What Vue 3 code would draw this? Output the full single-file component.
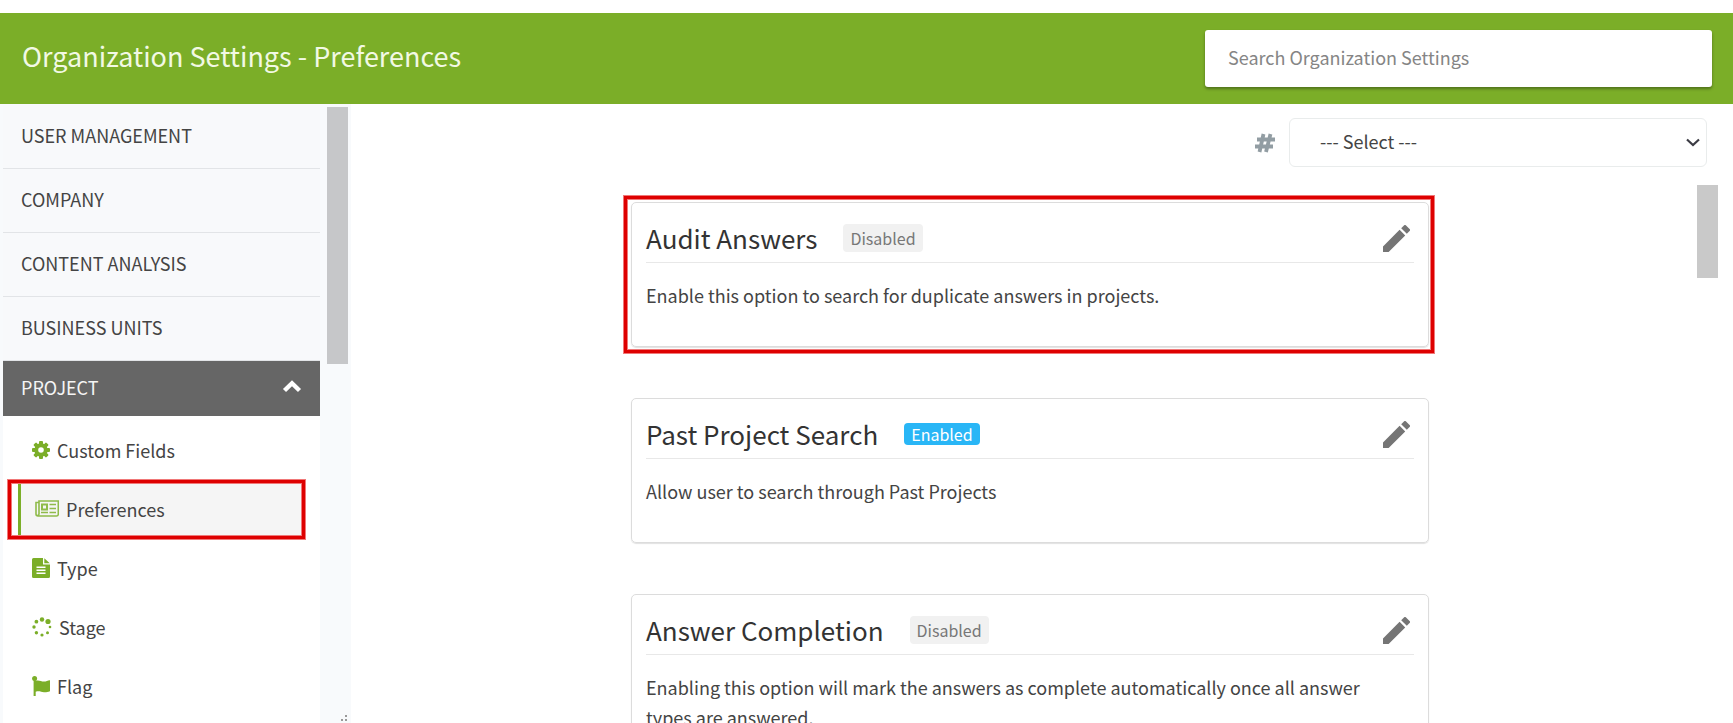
<script setup>
import { ref } from 'vue'

// Top level sections of the sidebar
const sections = ref(['USER MANAGEMENT', 'COMPANY', 'CONTENT ANALYSIS', 'BUSINESS UNITS'])

// Links inside the Project section
const links = ref([
  { name: 'Custom Fields', icon: 'cog' },
  { name: 'Preferences', icon: 'news' },
  { name: 'Type', icon: 'file' },
  { name: 'Stage', icon: 'spinner' },
  { name: 'Flag', icon: 'flag' }
])

const preferences = ref([
  {
    title: 'Audit Answers',
    enabled: false,
    marked: true,
    text: 'Enable this option to search for duplicate answers in projects.'
  },
  {
    title: 'Past Project Search',
    enabled: true,
    text: 'Allow user to search through Past Projects'
  },
  {
    title: 'Answer Completion',
    enabled: false,
    text: 'Enabling this option will mark the answers as complete automatically once all answer types are answered.'
  }
])

const active = ref('Preferences')
const projectOpen = ref(true)
const search = ref('')
const selected = ref('')
</script>

<template>
  <div class="page">
    <header class="topbar">
      <h1>Organization Settings - Preferences</h1>
      <input v-model="search" type="text" aria-label="Search Organization Settings" placeholder="Search Organization Settings" />
    </header>

    <div class="body">
      <!-- Sidebar -->
      <aside class="sidebar">
        <nav>
          <button v-for="section in sections" :key="section" class="section">{{ section }}</button>
          <button class="section open" @click="projectOpen = !projectOpen">
            PROJECT
            <svg width="20" height="13" viewBox="0 0 20 13">
              <path d="M2.5 10.5 10 3.2l7.5 7.3" fill="none" stroke="#fff" stroke-width="4.4" />
            </svg>
          </button>
          <ul v-if="projectOpen">
            <li v-for="link in links" :key="link.name">
              <a href="#" :class="{ active: link.name === active }" @click.prevent="active = link.name">
                <svg v-if="link.icon === 'cog'" width="18" height="18" viewBox="0 0 18 18">
                  <g fill="#7bae28">
                    <rect v-for="n in 4" :key="n" x="7" y="0" width="4" height="18" rx="1" :transform="`rotate(${n * 45} 9 9)`" />
                    <circle cx="9" cy="9" r="6.7" />
                  </g>
                  <circle cx="9" cy="9" r="2.8" fill="#fff" />
                </svg>
                <svg v-else-if="link.icon === 'news'" width="24" height="17" viewBox="0 0 24 17" fill="none" stroke="#8fbb4a">
                  <path d="M4 2.5H1V14a2 2 0 0 0 2 2h18.5a1.8 1.8 0 0 0 1.8-1.8V1H4v13a1.5 1.5 0 0 1-3 0" stroke-width="1.6" />
                  <rect x="7" y="4.5" width="5" height="5" stroke-width="2" />
                  <path d="M14.5 4.500h6.5M14.5 8.500h6.5M14.5 12.500h6.5M6 12.500h7" stroke-width="1.6" />
                </svg>
                <svg v-else-if="link.icon === 'file'" width="18" height="20" viewBox="0 0 18 20">
                  <path d="M1.5 0H11v6.5h7v12a1.5 1.5 0 0 1-1.5 1.5h-15A1.5 1.5 0 0 1 0 18.500v-17A1.5 1.5 0 0 1 1.5 0zM12.3.2 17.8 5.300h-5.5z" fill="#7bae28" />
                  <path d="M4.5 9.300h9M4.5 12.300h9M4.5 15.300h9" stroke="#fff" stroke-width="1.4" />
                </svg>
                <svg v-else-if="link.icon === 'spinner'" width="20" height="20" viewBox="0 0 20 20" fill="#7bae28">
                  <circle cx="10" cy="2.5" r="2.2" />
                  <circle cx="16" cy="4.5" r="2.6" />
                  <circle cx="18" cy="10" r="1.3" />
                  <circle cx="15.5" cy="15.7" r="1.5" />
                  <circle cx="10" cy="18" r="1.6" />
                  <circle cx="4.4" cy="15.7" r="1.7" />
                  <circle cx="2" cy="10" r="1.7" />
                  <circle cx="4.4" cy="4.7" r="1.9" />
                </svg>
                <svg v-else width="18" height="20" viewBox="0 0 18 20" fill="#7bae28">
                  <circle cx="2.6" cy="2.6" r="2.5" />
                  <path d="M1.6 3h2.1v1.800C7 3.500 9.500 5.800 12 5.600c2.2-.1 3.5-1 6-1.400v11c-2.5.8-4 1.3-6 1.100-3-.4-5-1.800-8.300-.5V20H1.6z" />
                </svg>
                <span>{{ link.name }}</span>
              </a>
            </li>
          </ul>
        </nav>
        <div class="side-thumb"></div>
        <svg class="grip" width="8" height="8" viewBox="0 0 8 8" fill="#999">
          <path d="M5 0h2v2H5zM1 4h2v2H1zM5 4h2v2H5z" />
        </svg>
      </aside>

      <!-- Main content -->
      <main>
        <div class="filter">
          <label for="tag" aria-label="Tag">
            <svg width="20" height="20" viewBox="0 0 20 20" stroke="#929da3" stroke-width="3.8">
              <path d="M8.5 1 4.500 19M15.500 1l-4.500 18M2 6.500h18M0 13.500h18" />
            </svg>
          </label>
          <div class="select">
            <select id="tag" v-model="selected">
              <option value="">--- Select ---</option>
            </select>
            <svg width="14" height="9" viewBox="0 0 14 9">
              <path d="m1 1.5 6 5.500 6-5.500" fill="none" stroke="#3c3c44" stroke-width="2.2" />
            </svg>
          </div>
        </div>

        <div class="scroll">
          <div class="cards">
            <section v-for="item in preferences" :key="item.title" class="card" :class="{ marked: item.marked }">
              <div class="card-head">
                <h2>{{ item.title }}</h2>
                <span class="badge" :class="{ enabled: item.enabled }">{{ item.enabled ? 'Enabled' : 'Disabled' }}</span>
                <button class="edit" :aria-label="'Edit ' + item.title">
                  <svg width="27" height="27" viewBox="3 3 18 18" fill="#757575">
                    <path d="M3 17.250V21h3.750L17.810 9.940l-3.750-3.750zM20.710 7.040a1 1 0 0 0 0-1.410l-2.340-2.340a1 1 0 0 0-1.410 0l-1.830 1.830 3.750 3.750z" />
                  </svg>
                </button>
              </div>
              <p>{{ item.text }}</p>
            </section>
          </div>
          <div class="main-thumb"></div>
        </div>
      </main>
    </div>
  </div>
</template>

<style>
body {
  margin: 0;
  background: #fff;
}
</style>

<style scoped>
.page {
  height: 100vh;
  padding-top: 13px;
  box-sizing: border-box;
  display: flex;
  flex-direction: column;
  overflow: hidden;
  font-family: "Noto Sans CJK SC", "Noto Sans", sans-serif;
  font-size: 18px;
  color: #444;
}

button,
input,
select {
  font: inherit;
  color: inherit;
}

svg {
  display: block;
  flex: none;
}

.topbar {
  flex: none;
  height: 91px;
  padding: 0 21px 0 22px;
  display: flex;
  align-items: center;
  justify-content: space-between;
  background: #7bae28;
}

h1 {
  margin: 0;
  padding-bottom: 5px;
  font-size: 27px;
  font-weight: 400;
  line-height: 36px;
  color: #f2f9e4;
}

.topbar input {
  width: 507px;
  height: 57px;
  padding: 0 23px 4px;
  box-sizing: border-box;
  border: none;
  border-radius: 3px;
  background: #fff;
  box-shadow: 0 2px 3px rgba(0, 0, 0, 0.35);
}

.topbar input::placeholder {
  color: #858585;
  opacity: 1;
}

.body {
  flex: 1;
  min-height: 0;
  display: flex;
}

.sidebar {
  position: relative;
  flex: none;
  width: 351px;
  padding: 1px 3px 0;
  box-sizing: border-box;
  display: flex;
  align-items: flex-start;
  gap: 7px;
  background: #f8fafc;
}

nav {
  flex: 1;
  min-height: 100%;
  background: #fff;
}

.section {
  width: 100%;
  height: 64px;
  padding: 0 18px 4px;
  display: flex;
  align-items: center;
  justify-content: space-between;
  border: none;
  border-bottom: 1px solid #e2e4e7;
  background: #f8f9fb;
  cursor: pointer;
}

.section.open {
  height: 55px;
  border-bottom: none;
  background: #666;
  color: #f5f5f5;
}

nav ul {
  margin: 0;
  padding: 5px 15px 0;
  list-style: none;
}

nav a {
  height: 59px;
  padding: 0 0 2px 14px;
  box-sizing: border-box;
  display: flex;
  align-items: center;
  gap: 7px;
  color: inherit;
  text-decoration: none;
}

nav a.active {
  position: relative;
  border-left: 3px solid #7bae28;
  background: #f5f5f5;
}

nav a.active::after,
.card.marked::after {
  content: "";
  position: absolute;
  border: 3px solid #de0000;
  box-shadow: 0 0 0 1px #f07878, inset 0 0 0 1px #f07878;
  pointer-events: none;
}

nav a.active::after {
  inset: 0 0 0 -13px;
}

.side-thumb {
  width: 21px;
  height: 257px;
  margin-top: 2px;
  background: #c6c7c9;
}

.grip {
  position: absolute;
  right: 3px;
  bottom: 0;
}

main {
  flex: 1;
  min-width: 0;
  display: flex;
  flex-direction: column;
}

.filter {
  flex: none;
  padding: 14px 26px 18px;
  display: flex;
  align-items: center;
  justify-content: flex-end;
  gap: 14px;
}

.select {
  position: relative;
  width: 418px;
}

.select select {
  width: 100%;
  height: 49px;
  padding: 0 30px 4px;
  box-sizing: border-box;
  display: block;
  appearance: none;
  border: 1px solid #e9ecec;
  border-radius: 6px;
  background: #fff;
}

.select svg {
  position: absolute;
  right: 7px;
  top: 20px;
  pointer-events: none;
}

.scroll {
  flex: 1;
  min-height: 0;
  padding-right: 15px;
  display: flex;
  align-items: flex-start;
}

.cards {
  flex: 1;
  padding: 17px 0 0 12px;
  display: flex;
  flex-direction: column;
  align-items: center;
  gap: 51px;
}

.card {
  position: relative;
  width: 100%;
  max-width: 798px;
  min-height: 145px;
  padding: 17px 14px;
  box-sizing: border-box;
  border: 1px solid #dcdcdc;
  border-radius: 5px;
  box-shadow: 0 1px 1px rgba(0, 0, 0, 0.12);
}

.card.marked::after {
  inset: -7px -6px -7px -8px;
}

.card-head {
  padding-bottom: 6px;
  display: flex;
  align-items: center;
  border-bottom: 1px solid #e8e8e8;
}

h2 {
  margin: 0 26px 0 0;
  font-size: 26px;
  font-weight: 400;
  line-height: 36px;
  color: #333;
}

.badge {
  padding: 0 7px;
  border-radius: 4px;
  background: #f1f1f1;
  font-size: 16px;
  line-height: 28px;
  color: #777;
}

.badge.enabled {
  background: #29b6f6;
  line-height: 22px;
  color: #fff;
}

.edit {
  margin: 0 4px 0 auto;
  padding: 0;
  border: none;
  background: none;
  cursor: pointer;
}

.card p {
  margin: 17px 20px 0 0;
  line-height: 30px;
}

.main-thumb {
  width: 21px;
  height: 93px;
  background: #c9c9c9;
}
</style>
